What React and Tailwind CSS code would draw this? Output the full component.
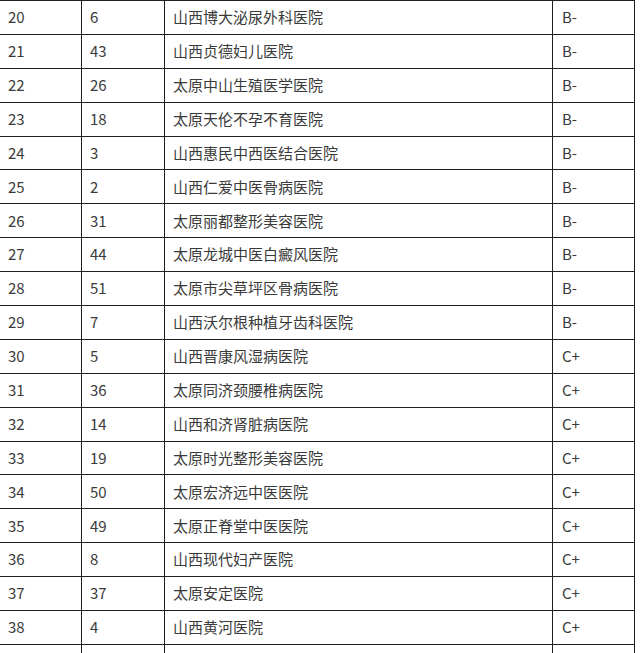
const rows = [
  ['20', '6', '山西博大泌尿外科医院', 'B-'],
  ['21', '43', '山西贞德妇儿医院', 'B-'],
  ['22', '26', '太原中山生殖医学医院', 'B-'],
  ['23', '18', '太原天伦不孕不育医院', 'B-'],
  ['24', '3', '山西惠民中西医结合医院', 'B-'],
  ['25', '2', '山西仁爱中医骨病医院', 'B-'],
  ['26', '31', '太原丽都整形美容医院', 'B-'],
  ['27', '44', '太原龙城中医白癜风医院', 'B-'],
  ['28', '51', '太原市尖草坪区骨病医院', 'B-'],
  ['29', '7', '山西沃尔根种植牙齿科医院', 'B-'],
  ['30', '5', '山西晋康风湿病医院', 'C+'],
  ['31', '36', '太原同济颈腰椎病医院', 'C+'],
  ['32', '14', '山西和济肾脏病医院', 'C+'],
  ['33', '19', '太原时光整形美容医院', 'C+'],
  ['34', '50', '太原宏济远中医医院', 'C+'],
  ['35', '49', '太原正脊堂中医医院', 'C+'],
  ['36', '8', '山西现代妇产医院', 'C+'],
  ['37', '37', '太原安定医院', 'C+'],
  ['38', '4', '山西黄河医院', 'C+'],
  ['', '', '', ''],
];

const App = () => {
  return (
    <div className="bg-white w-[640px] h-[653px] overflow-hidden">
      <div
        className="w-[635px] border-t border-[#1e1e1e] text-[15px] text-[#3a3a3a]"
        style={{ fontFamily: '"Noto Sans CJK SC", "Noto Sans", sans-serif' }}
      >
        {rows.map((r, i) => (
          <div key={i} className="flex h-[33.9px] border-b border-[#1e1e1e]">
            <div className="w-[82px] pl-2 flex items-center border-r border-[#1e1e1e]">{r[0]}</div>
            <div className="w-[83px] pl-2 flex items-center border-r border-[#1e1e1e]">{r[1]}</div>
            <div className="w-[388px] pl-2 flex items-center border-r border-[#1e1e1e]">{r[2]}</div>
            <div className="w-[82px] pl-[9px] flex items-center border-r border-[#1e1e1e]">{r[3]}</div>
          </div>
        ))}
      </div>
    </div>
  );
};

export default App;
